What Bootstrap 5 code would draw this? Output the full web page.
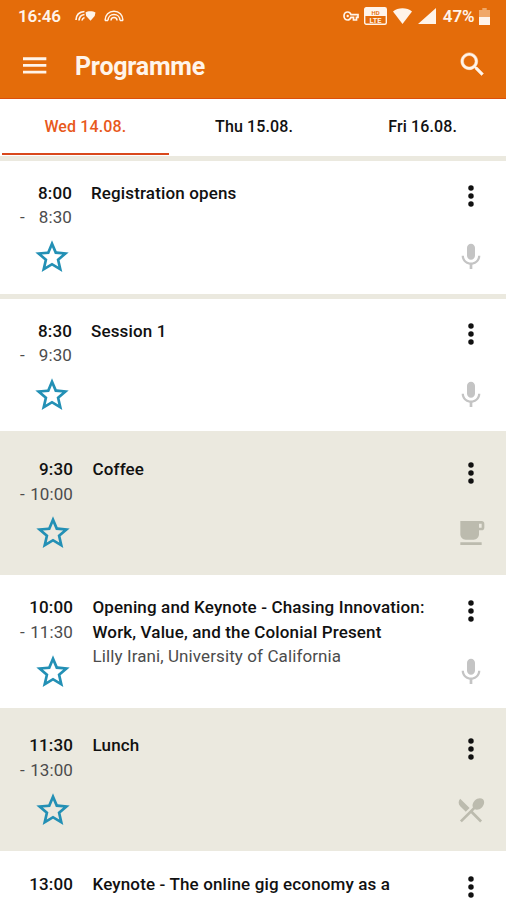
<!DOCTYPE html>
<html lang="en">
<head>
<meta charset="utf-8">
<meta name="viewport" content="width=device-width, initial-scale=1">
<title>Programme</title>
<link href="https://cdn.jsdelivr.net/npm/bootstrap@5.3.0/dist/css/bootstrap.min.css" rel="stylesheet">
<style>
  body { height: 900px; overflow: hidden; font-family: Roboto, "Liberation Sans", sans-serif; font-size: 17px; line-height: 24.6px; color: #111; }
  svg { display: block; fill: currentColor; flex: none; }
  .app-head { background: #e46c0a; height: 98.5px; border-bottom: 1.5px solid #dc4f0c; color: #fff4ea; }
  .status { height: 32px; padding: 0 16px 0 18px; font-size: 17px; font-weight: 600; }
  .status .clock { letter-spacing: -.1px; }
  .status .duo { margin-left: 14px; }
  .status .gap-a { margin-left: 5px; }
  .status .gap-b { margin-left: 6px; }
  .status .gap-c { margin-left: 4.5px; }
  .status .pct { margin-left: 7px; letter-spacing: -.1px; }
  .title-bar { height: 65px; padding: 2px 18px 0 19px; }
  .title-bar h1 { font-size: 25px; font-weight: 700; letter-spacing: -.25px; margin-left: 24px; line-height: 30px; padding-top: 2px; }
  .title-bar svg:last-child { margin-top: -2px; }
  .day-tabs { height: 62px; border-bottom: 5px solid #ebe9df; }
  .day-tabs .nav-link { height: 57px; padding: 16px 2px 0 0; margin: 0 0 0 2px; color: #111; font-size: 16px; font-weight: 500; border-radius: 0; letter-spacing: .12px; position: relative; }
  .day-tabs .nav-link.active { color: #e8591c; }
  .day-tabs .nav-link.active::after { content: ""; position: absolute; left: 0; right: 2px; bottom: 1px; height: 2px; background: #d9481c; }
  main { height: 739.5px; overflow: hidden; }
  .slot { height: 138.2px; padding: 20.3px 17px 0 20px; border-bottom: 5.5px solid #ebe9df; letter-spacing: .1px; }
  .slot:first-child { height: 138px; }
  .slot.pause { background: #ebe9df; margin-top: -5.5px; padding-top: 25.8px; height: 143.7px; }
  .slot.tail { height: 49px; overflow: hidden; border: 0; }
  .times { width: 53px; margin-right: 19.5px; }
  .early .times { width: 52px; margin-right: 19px; }
  .strong-txt { font-weight: 500; letter-spacing: .14px; }
  .soft-txt { font-weight: 400; color: #4c4c4c; }
  .star { color: #2390b5; margin: 7.2px 0 0 13px; }
  .early .star { margin-left: 12px; }
  .tools { width: 36px; margin-top: -.4px; }
  .kind { color: #c4c4c4; margin-top: 28.8px; }
  .pause .kind { color: #bcbbae; }
</style>
</head>
<body class="bg-white">
<svg width="0" height="0" class="position-absolute">
  <defs>
    <symbol id="star" viewBox="0 0 24 24"><path d="M22 9.24l-7.19-.62L12 2 9.19 8.63 2 9.24l5.46 4.73L5.82 21 12 17.27 18.18 21l-1.63-7.03L22 9.24zM12 15.4l-3.76 2.27 1-4.28-3.32-2.88 4.38-.38L12 6.1l1.71 4.04 4.38.38-3.32 2.88 1 4.28L12 15.4z"/></symbol>
    <symbol id="dots" viewBox="0 0 24 24"><circle cx="12" cy="6" r="2.05"/><circle cx="12" cy="12" r="2.05"/><circle cx="12" cy="18" r="2.05"/></symbol>
    <symbol id="mic" viewBox="0 0 24 24"><path d="M12 14c1.66 0 2.99-1.34 2.99-3L15 5c0-1.66-1.34-3-3-3S9 3.34 9 5v6c0 1.66 1.34 3 3 3zm5.3-3c0 3-2.54 5.1-5.3 5.1S6.7 14 6.7 11H5c0 3.41 2.72 6.23 6 6.72V21h2v-3.28c3.28-.48 6-3.3 6-6.72h-1.7z"/></symbol>
    <symbol id="cup" viewBox="0 0 24 24"><path d="M20 3H4v10c0 2.21 1.79 4 4 4h6c2.21 0 4-1.79 4-4v-3h2c1.11 0 2-.9 2-2V5c0-1.11-.89-2-2-2zm0 5h-2V5h2v3zM4 19h16v2H4z"/></symbol>
    <symbol id="dining" viewBox="0 0 24 24"><path d="M8.1 13.34l2.83-2.83L3.91 3.5c-1.56 1.56-1.56 4.09 0 5.66l4.19 4.18zm6.78-1.81c1.53.71 3.68.21 5.27-1.38 1.91-1.91 2.28-4.65.81-6.12-1.46-1.46-4.2-1.1-6.12.81-1.59 1.59-2.09 3.74-1.38 5.27L3.7 19.87l1.41 1.41L12 14.41l6.88 6.88 1.41-1.41L13.41 13l1.47-1.47z"/></symbol>
  </defs>
</svg>

<header class="app-head">
  <div class="status d-flex align-items-center">
    <span class="clock">16:46</span>
    <svg class="duo" width="21" height="12" viewBox="0 0 21 12"><g fill="none" stroke="currentColor" stroke-width="1.7"><path d="M1 10C1.2 5 4.5 1.8 9.500 1.500M4 10.500C4.200 7.500 6 5 9.500 4.500M7 10.500c.2-1.500 1-2.500 2.500-3"/></g><path d="M10.500 2.500C12.500.8 18 .8 20.500 2.500L19.700 6l-4.200 4.800L11.200 6z"/></svg>
    <svg class="ms-2" width="20" height="12" viewBox="0 0 20 12"><path fill="none" stroke="currentColor" stroke-width="1.5" d="M1 10.500C1 5 5 1.200 10 1.200S19 5 19 10.500M4 10.500c0-3.500 2.500-6 6-6s6 2.500 6 6M7 10.500c0-2 1-3 3-3s3 1 3 3M1 10.500h3M16 10.500h3"/></svg>
    <div class="d-flex align-items-center ms-auto">
      <svg width="16" height="10" viewBox="0 0 16 10"><path fill="none" stroke="currentColor" stroke-width="1.7" d="M8 3.600C7.300 1.800 6.200 1 4.700 1 2.500 1 1 2.800 1 5s1.500 4 3.700 4C6.200 9 7.300 8.200 8 6.400h2.500V9h3V6.400H15V3.600z"/><circle cx="4.700" cy="5" r="1.200"/></svg>
      <svg class="gap-a" width="23" height="18" viewBox="0 0 23 18"><rect x=".7" y=".7" width="21.6" height="16.6" rx="1.5" fill="none" stroke="currentColor" stroke-width="1.4"/><path d="M1 1h21v8H1z"/><text x="11.5" y="7.500" text-anchor="middle" font-size="6" font-weight="600" fill="#e46c0a">HD</text><text x="11.5" y="15.700" text-anchor="middle" font-size="7.5" font-weight="600">LTE</text></svg>
      <svg class="gap-b" width="19" height="16" viewBox="0 0 19 16"><path d="M0 3.500C5-.8 14-.8 19 3.500L9.500 16z"/></svg>
      <svg class="gap-b" width="18" height="16" viewBox="0 0 18 16"><path d="M18 0v16H0z"/></svg>
      <span class="pct">47%</span>
      <svg class="gap-c" width="11" height="17" viewBox="0 0 10 17" preserveAspectRatio="none"><path fill="#f0a868" d="M3 0h4v2h3v8H0V2h3z"/><path d="M0 9h10v8H0z"/></svg>
    </div>
  </div>
  <div class="title-bar d-flex align-items-center">
    <svg width="32" height="32" viewBox="0 0 24 24"><path d="M3 17.600h17.500V15.500H3zM3 12.600h17.500v-2.100H3zM3 5.500v2.100h17.500V5.500z"/></svg>
    <h1 class="mb-0">Programme</h1>
    <svg class="ms-auto" width="31" height="31" viewBox="0 0 24 24" stroke="currentColor" stroke-width=".4"><path d="M15.500 14h-.79l-.28-.27C15.410 12.590 16 11.110 16 9.500 16 5.910 13.090 3 9.500 3S3 5.910 3 9.500 5.910 16 9.500 16c1.610 0 3.090-.59 4.230-1.570l.27.28v.79l5 4.990L20.490 19l-4.990-5zm-6 0C7.010 14 5 11.990 5 9.500S7.010 5 9.500 5 14 7.010 14 9.500 11.990 14 9.500 14z"/></svg>
  </div>
</header>

<nav class="day-tabs nav nav-fill flex-nowrap">
  <div class="nav-item w-100"><a class="nav-link active">Wed 14.08.</a></div>
  <div class="nav-item w-100"><a class="nav-link">Thu 15.08.</a></div>
  <div class="nav-item w-100"><a class="nav-link">Fri 16.08.</a></div>
</nav>

<main>
  <section class="slot early d-flex">
    <div class="times flex-shrink-0">
      <div class="strong-txt text-end">8:00</div>
      <div class="soft-txt d-flex justify-content-between"><span>-</span><span>8:30</span></div>
      <svg class="star" width="40" height="40"><use href="#star"/></svg>
    </div>
    <div class="flex-grow-1"><div class="strong-txt">Registration opens</div></div>
    <div class="tools d-flex flex-column align-items-center"><svg width="32" height="32"><use href="#dots"/></svg><svg class="kind" width="32" height="32"><use href="#mic"/></svg></div>
  </section>
  <section class="slot early d-flex">
    <div class="times flex-shrink-0">
      <div class="strong-txt text-end">8:30</div>
      <div class="soft-txt d-flex justify-content-between"><span>-</span><span>9:30</span></div>
      <svg class="star" width="40" height="40"><use href="#star"/></svg>
    </div>
    <div class="flex-grow-1"><div class="strong-txt">Session 1</div></div>
    <div class="tools d-flex flex-column align-items-center"><svg width="32" height="32"><use href="#dots"/></svg><svg class="kind" width="32" height="32"><use href="#mic"/></svg></div>
  </section>
  <section class="slot pause d-flex">
    <div class="times flex-shrink-0">
      <div class="strong-txt text-end">9:30</div>
      <div class="soft-txt d-flex justify-content-between"><span>-</span><span>10:00</span></div>
      <svg class="star" width="40" height="40"><use href="#star"/></svg>
    </div>
    <div class="flex-grow-1"><div class="strong-txt">Coffee</div></div>
    <div class="tools d-flex flex-column align-items-center"><svg width="32" height="32"><use href="#dots"/></svg><svg class="kind" width="32" height="32"><use href="#cup"/></svg></div>
  </section>
  <section class="slot d-flex">
    <div class="times flex-shrink-0">
      <div class="strong-txt text-end">10:00</div>
      <div class="soft-txt d-flex justify-content-between"><span>-</span><span>11:30</span></div>
      <svg class="star" width="40" height="40"><use href="#star"/></svg>
    </div>
    <div class="flex-grow-1 text-nowrap"><div class="strong-txt">Opening and Keynote - Chasing Innovation:<br>Work, Value, and the Colonial Present</div><div class="soft-txt">Lilly Irani, University of California</div></div>
    <div class="tools d-flex flex-column align-items-center"><svg width="32" height="32"><use href="#dots"/></svg><svg class="kind" width="32" height="32"><use href="#mic"/></svg></div>
  </section>
  <section class="slot pause d-flex">
    <div class="times flex-shrink-0">
      <div class="strong-txt text-end">11:30</div>
      <div class="soft-txt d-flex justify-content-between"><span>-</span><span>13:00</span></div>
      <svg class="star" width="40" height="40"><use href="#star"/></svg>
    </div>
    <div class="flex-grow-1"><div class="strong-txt">Lunch</div></div>
    <div class="tools d-flex flex-column align-items-center"><svg width="32" height="32"><use href="#dots"/></svg><svg class="kind" width="32" height="32"><use href="#dining"/></svg></div>
  </section>
  <section class="slot tail d-flex">
    <div class="times flex-shrink-0"><div class="strong-txt text-end">13:00</div></div>
    <div class="flex-grow-1 text-nowrap"><div class="strong-txt">Keynote - The online gig economy as a</div></div>
    <div class="tools d-flex flex-column align-items-center"><svg width="32" height="32"><use href="#dots"/></svg></div>
  </section>
</main>
<script src="https://cdn.jsdelivr.net/npm/bootstrap@5.3.0/dist/js/bootstrap.bundle.min.js"></script>
</body>
</html>
